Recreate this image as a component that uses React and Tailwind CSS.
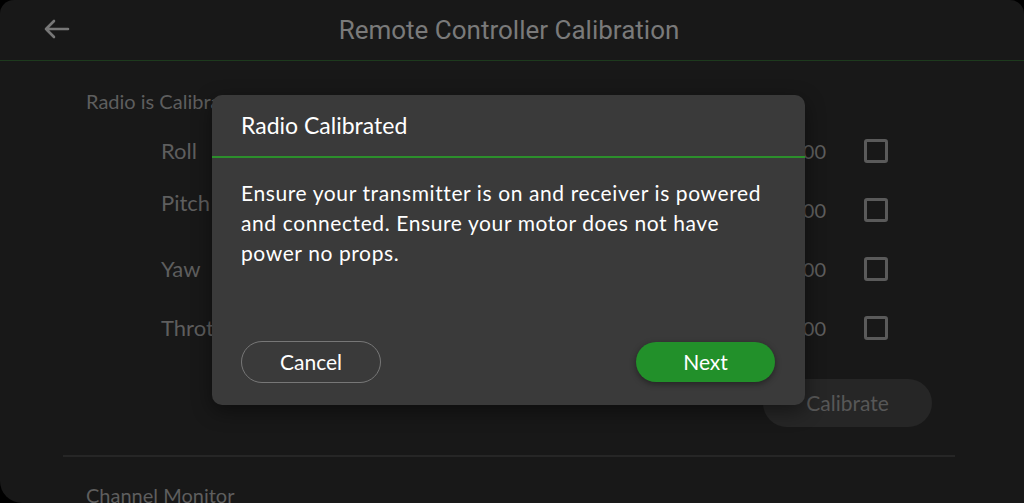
import { useState } from "react";

const channels = [
  { name: "Roll", value: 1500, lift: false },
  { name: "Pitch", value: 1500, lift: true },
  { name: "Yaw", value: 1500, lift: false },
  { name: "Throttle", value: 1500, lift: false },
];

function BackArrow() {
  return (
    <svg className="w-[28px] h-[20px]" viewBox="0 0 28 20" fill="none" stroke="#777" strokeWidth={2.6} strokeLinecap="round" strokeLinejoin="round">
      <path d="M25 10H3M11 2L3 10l8 8" />
    </svg>
  );
}

function ChannelRow({ name, value, lift }) {
  return (
    <div className="h-[59px] flex items-center">
      <span className={`w-[600px] pl-[75px] text-[22px] text-[#5e5e5e] ${lift ? "-mt-[14px]" : ""}`}>{name}</span>
      <span className="w-[100px] ml-[40px] text-right text-[20px] text-[#5e5e5e]">{value}</span>
      <span className="ml-[38px] w-[24px] h-[24px] border-[3px] border-[#5a5a5a] rounded-[3px]" />
    </div>
  );
}

export default function App() {
  const [open, setOpen] = useState(true);

  return (
    <div className="w-[1024px] h-[503px] bg-black overflow-hidden" style={{ fontFamily: "Lato, 'Open Sans', sans-serif" }}>
      <div className="relative w-full h-full bg-[#181818] rounded-tl-[14px] rounded-tr-[14px] rounded-bl-[22px] overflow-hidden">
        {/* header */}
        <div className="h-[61px] flex items-center relative border-b border-[#1d3a1d]">
          <button className="absolute left-[43px] top-[19px]">
            <BackArrow />
          </button>
          <h1 className="w-full text-center text-[26px] text-[#7a7a7a] mt-[1px] pr-[6px]" style={{ fontFamily: "Roboto, sans-serif" }}>
            Remote Controller Calibration
          </h1>
        </div>

        {/* calibration section */}
        <div className="px-[86px] pt-[25px]">
          <p className="text-[20px] text-[#5e5e5e]">Radio is Calibrated</p>
          <div className="mt-[5px]">
            {channels.map((c) => (
              <ChannelRow key={c.name} {...c} />
            ))}
          </div>
          <div className="flex justify-end pr-[6px] mt-[22px]">
            <button className="w-[169px] h-[48px] rounded-full bg-[#262626] text-[21px] text-[#575757]">Calibrate</button>
          </div>
        </div>

        <div className="ml-[63px] mr-[69px] mt-[28px] border-t-2 border-[#262626]" />
        <p className="px-[86px] pt-[26px] text-[20px] leading-[24px] text-[#5e5e5e]">Channel Monitor</p>

        {/* modal */}
        {open && (
          <div className="absolute left-[212px] top-[95px] w-[593px] h-[310px] rounded-[10px] bg-[#3a3a3a] shadow-[0_6px_20px_rgba(0,0,0,0.45)] flex flex-col">
            <div className="h-[63px] border-b-2 border-[#2c8f2c] px-[29px] flex items-center">
              <h2 className="text-[23px] text-white">Radio Calibrated</h2>
            </div>
            <p className="px-[29px] pt-[20px] text-[21px] leading-[30px] tracking-[0.6px] text-white">
              Ensure your transmitter is on and receiver is powered and connected. Ensure your motor does not have power no props.
            </p>
            <div className="mt-auto mb-[22px] px-[29px] flex justify-between">
              <button onClick={() => setOpen(false)} className="w-[140px] h-[42px] rounded-full border border-[#777] text-[21px] text-white">
                Cancel
              </button>
              <button onClick={() => setOpen(false)} className="w-[139px] h-[40px] mr-[1px] mt-[1px] rounded-full bg-[#22902a] text-[21px] text-white shadow-[0_2px_6px_rgba(0,0,0,0.4)]">
                Next
              </button>
            </div>
          </div>
        )}
      </div>
    </div>
  );
}
